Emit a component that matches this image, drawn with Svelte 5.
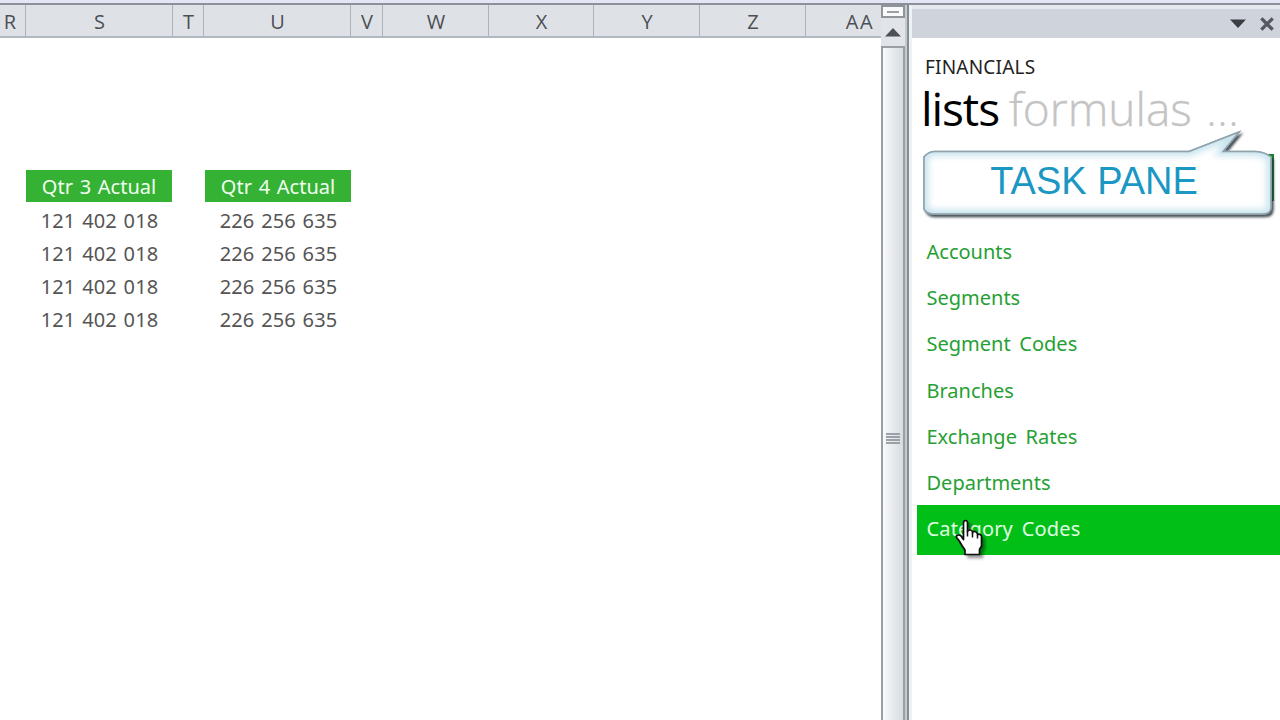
<script>
  const columns = [
    { name: 'R', width: 26 }, { name: 'S', width: 147 }, { name: 'T', width: 31 },
    { name: 'U', width: 147 }, { name: 'V', width: 32 }, { name: 'W', width: 106 },
    { name: 'X', width: 105 }, { name: 'Y', width: 106 }, { name: 'Z', width: 106 },
    { name: 'AA', width: 107 }
  ];
  const quarters = [
    { title: 'Qtr 3 Actual', value: '121 402 018' },
    { title: 'Qtr 4 Actual', value: '226 256 635' }
  ];
  const lists = ['Accounts', 'Segments', 'Segment Codes', 'Branches', 'Exchange Rates', 'Departments', 'Category Codes'];
  const selected = 'Category Codes';
  const bubble = 'M17 23.5H272L322 4 306 23.5H338Q348 24 354 29V79Q354 86 346 86H16Q10 86 7 81V29Q11 24 17 23.5Z';
</script>

<div class="app">
  <div class="ribbon-edge"></div>
  <div class="body">
    <main class="sheet">
      <div class="columns">
        {#each columns as c}
          <div class="col" class:first={c.name === 'R'} style="width:{c.width}px"><span>{c.name}</span></div>
        {/each}
      </div>
      <div class="data">
        {#each quarters as q}
          <section class="quarter">
            <h3>{q.title}</h3>
            {#each [0, 1, 2, 3] as row (row)}
              <div class="cell">{q.value}</div>
            {/each}
          </section>
        {/each}
      </div>
    </main>

    <div class="scroll">
      <div class="split"><i></i></div>
      <div class="up"><svg width="16" height="9" viewBox="0 0 16 9"><path d="M0 8.5 8 0l8 8.500z" fill="#4d5156" /></svg></div>
      <div class="thumb"><div class="grip"><i></i><i></i><i></i><i></i></div></div>
    </div>
    <div class="divider"></div>

    <aside class="pane">
      <div class="titlebar">
        <svg width="16" height="10" viewBox="0 0 16 10"><path d="M0 .5h16L8 9z" fill="#3b3d42" /></svg>
        <svg width="14" height="14" viewBox="0 0 14 14"><path d="M2.500 2.500 11.500 11.500M11.500 2.500 2.500 11.500" stroke="#55585d" stroke-width="3.300" stroke-linecap="square" /></svg>
      </div>
      <div class="content">
        <div class="product">FINANCIALS</div>
        <div class="tabs"><span class="active">lists</span><span class="formulas">formulas</span><span class="more">...</span></div>
        <div class="callout">
          <div class="sliver"></div>
          <svg width="366" height="100" viewBox="0 0 366 100">
            <defs>
              <filter id="shade" x="-5%" y="-10%" width="112%" height="130%">
                <feDropShadow dx="2" dy="2.500" stdDeviation="1.100" flood-color="#26323a" flood-opacity=".85" />
              </filter>
              <filter id="soft" x="-5%" y="-10%" width="110%" height="120%"><feGaussianBlur stdDeviation="3" /></filter>
              <clipPath id="bubble"><path d={bubble} /></clipPath>
            </defs>
            <path d={bubble} fill="#fff" stroke="#8fa3ac" stroke-width="1.500" filter="url(#shade)" />
            <g clip-path="url(#bubble)">
              <path d={bubble} fill="none" stroke="#c9e4ee" stroke-width="9" filter="url(#soft)" />
            </g>
            <path d={bubble} fill="none" stroke="#8fa3ac" stroke-width="1.500" />
          </svg>
          <div class="callout-text">TASK PANE</div>
        </div>
        <nav>
          {#each lists as item}
            <div class="item" class:selected={item === selected}><span>{item}</span>
              {#if item === selected}
                <svg class="hand" width="32" height="44" viewBox="0 0 32 44">
                  <defs><filter id="handshade" x="-20%" y="-20%" width="160%" height="160%"><feDropShadow dx="3" dy="3" stdDeviation="1.500" flood-opacity=".4" /></filter></defs>
                  <path d="M8.500 4Q8.500 1.500 10.500 1.500T12.500 4V12.500Q13 11 15 11T17.500 13V14Q18 12 20 12.500T22.500 15V16Q23 14.500 25 15.500T26.500 18V27L24.500 30.500V35.500H10V31L7 26.500 4 21.500 1.500 18.500Q1 16 3.500 16T7 18.500L8.500 20.500Z" fill="#fff" stroke="#111" stroke-width="1.700" stroke-linejoin="round" filter="url(#handshade)" />
                  <path d="M12.500 12V17.500M17.500 14V18.500M22.500 16V19.500" stroke="#111" stroke-width="1.500" />
                </svg>
              {/if}
            </div>
          {/each}
        </nav>
      </div>
    </aside>
  </div>
</div>

<style>
  :global(body) { margin: 0; overflow: hidden; background: #fff; }
  * { box-sizing: border-box; }
  .app { width: 1280px; height: 720px; display: flex; flex-direction: column; overflow: hidden; font-family: "Noto Sans", sans-serif; background: #fff; }
  .ribbon-edge { height: 5px; flex: none; background: #e2e6f5; border-bottom: 2px solid #8b9099; }
  .body { flex: 1; display: flex; min-height: 0; }
  .sheet { width: 881px; overflow: hidden; flex: none; }
  .columns { display: flex; height: 33px; background: #dee2e7; border-bottom: 2px solid #b3b9c0; }
  .col { flex: none; border-right: 1px solid #adb3ba; display: flex; align-items: center; justify-content: center; font-size: 20px; line-height: 30px; color: #4c4f53; }
  .col span { margin: 3px 0 0 1px; font-family: "Open Sans", sans-serif; }
  .col.first { padding-right: 6px; }
  .col:last-child { border: 0; letter-spacing: 1.500px; }
  .data { display: flex; gap: 33px; padding: 132px 0 0 26px; }
  .quarter { width: 146px; text-align: center; }
  h3 { margin: 0 0 2px; height: 32px; background: #35b234; color: #f1fff0; font-size: 20px; line-height: 34px; font-weight: 400; word-spacing: 1.500px; }
  .cell { height: 33px; padding-left: 1px; font-size: 20px; line-height: 33px; color: #555; letter-spacing: .1px; word-spacing: 1.500px; white-space: pre; }
  .scroll { width: 24px; flex: none; display: flex; flex-direction: column; background: #e1e5e9; }
  .split { height: 13px; border: 2px solid #90959b; background: #fafafa; display: flex; align-items: center; justify-content: center; }
  .split i { width: 12px; height: 2px; background: #9b9fa4; }
  .up { height: 28px; display: flex; justify-content: center; align-items: center; }
  .thumb { flex: 1; border: 2px solid #9a9fa5; border-bottom: 0; background: linear-gradient(90deg, #f8f9fb, #e3e7ec 60%, #d7dce2); display: flex; justify-content: center; padding-top: 385px; }
  .grip { width: 14px; display: flex; flex-direction: column; gap: 1px; }
  .grip i { height: 2px; background: #9ca1a8; }
  .divider { width: 7px; flex: none; border-left: 1px solid #c4c9ce; background: linear-gradient(90deg, #c8ccd2 0 1px, #858c95 1px 3px, #edf2f7 3px); }
  .pane { flex: 1; display: flex; flex-direction: column; min-width: 0; }
  .titlebar { height: 33px; border-top: 4px solid #e5e9ee; background: #ced3dc; display: flex; align-items: center; justify-content: flex-end; gap: 14px; padding: 0 6px 0 0; }
  .content { flex: 1; padding-left: 5px; }
  .product { padding: 16px 0 0 8px; font-size: 19px; line-height: 26px; letter-spacing: .2px; color: #222; }
  .tabs { height: 62px; padding-left: 4px; display: flex; font-family: "Open Sans", sans-serif; font-size: 46px; line-height: 56px; font-weight: 300; color: #c4c4c4; white-space: nowrap; }
  .active { color: #000; width: 88px; font-weight: 400; letter-spacing: -1.100px; }
  .formulas { width: 197px; -webkit-text-stroke: .4px #c4c4c4; }
  .callout { position: relative; height: 87px; }
  .callout svg { position: absolute; left: 0; top: -14px; }
  .callout-text { position: absolute; left: 3px; top: 14px; width: 348px; text-align: center; font: 38px/50px "Liberation Sans", sans-serif; color: #1b97c4; }
  .sliver { position: absolute; left: 346px; top: 12px; width: 11px; height: 47px; background: #16832a; }
  nav { margin-top: -1px; }
  .item { height: 46.200px; padding-left: 9.500px; color: #26a033; font-size: 20px; line-height: 47px; word-spacing: 3.500px; position: relative; white-space: nowrap; }
  .item.selected { height: 50px; background: #02bf18; color: #e0ffe2; line-height: 48px; letter-spacing: .15px; }
  .hand { position: absolute; left: 38px; top: 14px; }
</style>
